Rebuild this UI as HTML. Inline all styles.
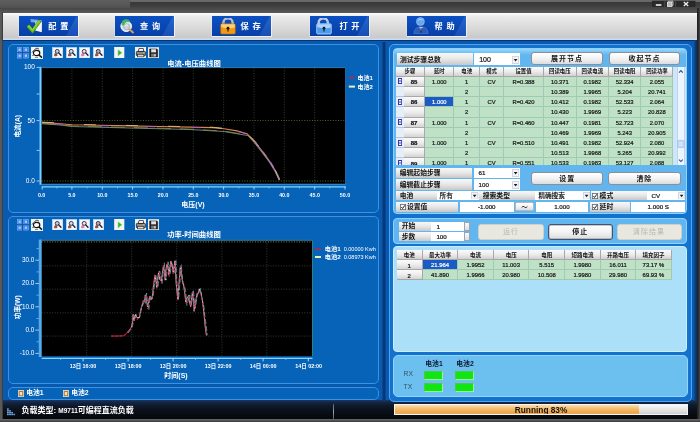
<!DOCTYPE html>
<html lang="zh"><head><meta charset="utf-8"><title>M9711</title>
<style>
*{box-sizing:border-box;margin:0;padding:0}
html,body{width:700px;height:422px;overflow:hidden;background:#4b4b4b}
#rb{left:697px;top:8px;width:3px;height:414px;background:linear-gradient(90deg,#1e1e1e,#2e2e2e 50%,#4a4a4a)}
#bb{left:0;top:418.6px;width:700px;height:3.4px;background:linear-gradient(#6a6a6a 0,#5a5a5a 35%,#3a3a3a 100%)}
#lb{left:0;top:12px;width:3px;height:407px;background:linear-gradient(90deg,#5c5c5c 0,#565656 55%,#2c3038 100%)}
body{position:relative;font-family:"Liberation Sans","Noto Sans CJK SC",sans-serif;font-size:8px;line-height:1;color:#1a1a1a;filter:blur(.4px)}
.a{position:absolute;white-space:nowrap;overflow:hidden}
.t{position:absolute;white-space:nowrap;line-height:1}
.c{text-align:center}
.w{color:#fff}
.b{font-weight:bold}
#title{left:0;top:0;width:700px;height:13px;background:linear-gradient(#6c6c6c 0,#666 1.5px,#3a3a3a 2.4px,#3c3c3c 5px,#484848 8.5px,#585858 12.6px)}
#tool{left:3px;top:12.6px;width:694px;height:27px;background:linear-gradient(#fdfdfd 0,#f6f6f6 1.4px,#ececec 3px,#e4e4e4 8px,#d6d6d6 17px,#c9c9c9 25.2px,#d4e2f6 26px,#c0d6f4 27px)}
.tb{position:absolute;top:15.9px;height:20.2px;width:58.9px;overflow:hidden;
 background:linear-gradient(#0b50c2 0,#0a49b6 45%,#083fa6 100%);box-shadow:.3px .5px 0 .6px rgba(255,255,255,.7)}
.tb:after{content:"";position:absolute;left:0;top:0;width:58.9px;height:20.2px;background:linear-gradient(#2766cc,#184fb6);clip-path:polygon(100% 0,100% 100%,80% 100%,98.5% 0)}
.tb .lbl{position:absolute;left:29.4px;top:6.9px;width:32px;font-size:8.2px;font-weight:bold;color:#fff;letter-spacing:3.8px;z-index:2;white-space:nowrap}
.tb svg{position:absolute;z-index:2}
#main{left:3px;top:39.6px;width:694px;height:361px;background:#075aae}
.pn{position:absolute;border:1.3px solid #3a92e4;border-radius:5px;background:#0763b8}
.ip{position:absolute;border:1px solid #8fd2ff;border-radius:4px}
.lb{position:absolute;background:linear-gradient(#f8f8f8 0,#e9e9e9 45%,#c8c8c8 100%);font-weight:bold;white-space:nowrap;overflow:hidden;color:#111}
.in{position:absolute;background:#fff;white-space:nowrap;overflow:hidden;color:#111}
.dd{position:absolute;width:7px;background:linear-gradient(#fff,#d8d8e0);border:.5px solid #7a8aa8}
.dd:after{content:"";position:absolute;left:1.5px;top:3.5px;border:2px solid transparent;border-top:2.5px solid #000}
.btn{position:absolute;border:1px solid #8a8f98;border-radius:3px;background:linear-gradient(#ffffff 0,#f3f3f3 50%,#dcdcdc 100%);text-align:center;font-weight:bold;font-size:7px;color:#111;letter-spacing:1px;white-space:nowrap;overflow:hidden}
.btn.dis{background:#e9e8e0;border-color:#d0d0c8;color:#b6b6ae;font-weight:normal}
.btn.def{border-color:#46526a;box-shadow:inset 0 0 0 .4px #8a96ac}
.hd{position:absolute;background:linear-gradient(#fbfbfb 0,#ececec 50%,#d0d0d0 100%);border-right:1px solid #a8a8a8;border-bottom:1px solid #a8a8a8;text-align:center;font-weight:bold;white-space:nowrap;overflow:hidden;color:#111}
.cl{position:absolute;background:#bfe2c6;border-right:1px solid #a2c8b6;border-bottom:1px solid #a2c8b6;text-align:center;white-space:nowrap;overflow:hidden;color:#151515}
.cl.sel{background:#1a5cc4;color:#fff;-webkit-text-stroke:.2px #fff}
.cl,.rh,.in{-webkit-text-stroke:.22px #1a1a1a}
.rh{position:absolute;background:linear-gradient(#fbfbfb 0,#ededed 50%,#d4d4d4 100%);border-right:1px solid #a8a8a8;border-bottom:1px solid #a8a8a8;text-align:center;white-space:nowrap;overflow:hidden;color:#111}
.ic{position:absolute;width:11.5px;height:11.5px;background:#f2f2f2;overflow:hidden}
</style></head>
<body>

<div id="title" class="a"><div class="a" style="left:0;top:0;width:130px;height:8.4px;background:linear-gradient(#5e5e5e,#585858 60%,#505050)"></div><svg class="a" style="left:651px;top:0" width="46" height="8" viewBox="0 0 46 8"><rect x="1" y=".8" width="43.4" height="6.2" fill="#292929"/><rect x="4.8" y="4.2" width="5.6" height="1.6" fill="#f0f0f0"/><path d="M13.8 .8V7M24.6 .8V7" stroke="#505050" stroke-width=".8"/><rect x="16.4" y="2.2" width="4.6" height="4.2" fill="#b8b8b8" stroke="#ececec" stroke-width=".8"/><path d="M17.6 2V1.2H22V5.4H21.2" fill="none" stroke="#dcdcdc" stroke-width=".8"/><path d="M32.8 2 L37.2 6 M37.2 2 L32.8 6" stroke="#f2f2f2" stroke-width="1.3"/></svg></div>
<div id="tool" class="a"></div><div id="rb" class="a"></div><div id="lb" class="a"></div><div id="bb" class="a"></div>
<div class="tb" style="left:18.9px"><svg style="left:7.6px;top:1.4px" width="18" height="18" viewBox="0 0 18 18"><path d="M4.4 2 L15.9 3.2 L15.7 5.8 L5 5.2Z" fill="#7fa6e4"/><path d="M9.4 4.6 L16 5.2 L15.8 15.2 L9.2 13.6Z" fill="#f3f5f9"/><path d="M9.4 4.6 L12.6 4.9 L12.4 9 L9.3 8.6Z" fill="#b8cdee"/><path d="M.8 9.7 L3.2 7.7 L6.4 11.7 L12.7 3 L15 4.8 L6.6 16.2Z" fill="#74c61c" stroke="#3f8c0c" stroke-width=".7"/><path d="M2 9.6 L3.2 8.6 L6.5 12.8 L12.8 4 L13.8 4.8" fill="none" stroke="#b4ec68" stroke-width=".6"/></svg><div class="lbl" style="left: 29.4px;">配置</div></div>
<div class="tb" style="left:115.1px"><svg style="left:5px;top:2.6px" width="16" height="16" viewBox="0 0 16 16"><circle cx="6.2" cy="8.2" r="5.3" fill="#dfe6ea" stroke="#f6f8fa" stroke-width="1"/><path d="M1.4 5.6 Q2.2 1.2 6 1.2 Q9.8 1.2 10 4.4 Q7.6 3 5.8 4.6 Q4.2 6 3.4 8 Q1.6 8 1.4 5.6Z" fill="#42b45e"/><circle cx="6.6" cy="8.8" r="3.1" fill="#c8d4dc" stroke="#98a8b4" stroke-width=".7"/><path d="M5 8.2 Q6.4 6 8.2 7.4" fill="none" stroke="#fff" stroke-width=".8"/><path d="M9.6 11.6 L13 14.4" stroke="#d8a050" stroke-width="2" stroke-linecap="round"/></svg><div class="lbl" style="left: 24.9px;">查询</div></div>
<div class="tb" style="left:212px"><svg style="left:8px;top:2.2px" width="17" height="17" viewBox="0 0 17 17"><path d="M3.4 7 V4.6 A4.6 4.2 0 0 1 12.6 4.6 V7" fill="none" stroke="#d4d6de" stroke-width="2.2"/><path d="M3.4 7 V4.6 A4.6 4.2 0 0 1 12.6 4.6" fill="none" stroke="#8a90a4" stroke-width=".6"/><rect x=".7" y="5.8" width="14.6" height="10.2" rx="1.2" fill="#f09a14" stroke="#b86c08" stroke-width=".6"/><path d="M1.2 6.3 H14.8 V9.4 Q8 11.4 1.2 9Z" fill="#ffd884" opacity=".85"/><circle cx="8" cy="10.2" r="1.4" fill="#241808"/><rect x="7.4" y="10.6" width="1.2" height="2.9" fill="#241808"/></svg><div class="lbl" style="left: 28.6px;">保存</div></div>
<div class="tb" style="left:309.7px"><svg style="left:6.4px;top:2.2px" width="17" height="17" viewBox="0 0 17 17"><path d="M2.6 7 V4.6 A4.6 4.2 0 0 1 11.8 4.6 V5.6" fill="none" stroke="#dfe6f0" stroke-width="2.2"/><path d="M2.6 7 V4.6 A4.6 4.2 0 0 1 11.8 4.6" fill="none" stroke="#8aa0c4" stroke-width=".6"/><rect x=".7" y="5.8" width="14.6" height="10.2" rx="1.2" fill="#4c9cec" stroke="#cfe6fc" stroke-width=".7"/><path d="M1.2 6.3 H14.8 V9.4 Q8 11.4 1.2 9Z" fill="#b4dcfc" opacity=".9"/><circle cx="8" cy="10.2" r="1.4" fill="#0c1c34"/><rect x="7.4" y="10.6" width="1.2" height="2.9" fill="#0c1c34"/></svg><div class="lbl" style="left: 29.7px;">打开</div></div>
<div class="tb" style="left:407.1px"><svg style="left:6px;top:1.6px" width="17" height="17" viewBox="0 0 17 17"><path d="M.9 16.6 Q1.2 9.8 8 9.8 Q14.8 9.8 15.1 16.6Z" fill="#2c5cb8" stroke="#5a8cdc" stroke-width=".5"/><circle cx="7.4" cy="4.6" r="4" fill="#6aa6ee" stroke="#9cc8f8" stroke-width=".6"/><path d="M5 3.4 Q7 1.4 9.4 3" fill="none" stroke="#cfe6ff" stroke-width=".7"/><path d="M6.4 9.9 L8 14.2 L9.6 9.9Z" fill="#f4f6fa"/><rect x="7.5" y="10.6" width="1.1" height="5.2" fill="#16243e"/></svg><div class="lbl" style="left: 27.5px;">帮助</div></div>
<div id="main" class="a"><div class="a" style="left:0;top:0;width:694px;height:1.8px;background:linear-gradient(#082862,#083c84)"></div><div class="a" style="left:378.9px;top:2px;width:4.2px;height:359px;background:linear-gradient(90deg,#08509e,#08387a 35%,#08347a 65%,#0850a0)"></div><div class="a" style="left:691px;top:0;width:3px;height:362px;background:linear-gradient(90deg,#08509e,#083878 60%,#062c68)"></div></div>
<div class="pn" style="left:7.8px;top:44px;width:371.4px;height:169.2px"></div>
<svg class="a" style="left:17px;top:46.7px" width="12" height="12" viewBox="0 0 12 12"><rect x="0.3" y="0.3" width="4.8" height="4.8" fill="#3a80e6" stroke="#78b4fc" stroke-width=".6"/><rect x="1.6" y="1.6" width="2.2" height="2.2" fill="#a8d0ff"/><rect x="0.3" y="6.3" width="4.8" height="4.8" fill="#3a80e6" stroke="#78b4fc" stroke-width=".6"/><rect x="1.6" y="7.6" width="2.2" height="2.2" fill="#a8d0ff"/><rect x="6.5" y="0.3" width="4.8" height="4.8" fill="#3a80e6" stroke="#78b4fc" stroke-width=".6"/><rect x="7.8" y="1.6" width="2.2" height="2.2" fill="#a8d0ff"/><rect x="6.5" y="6.3" width="4.8" height="4.8" fill="#3a80e6" stroke="#78b4fc" stroke-width=".6"/><rect x="7.8" y="7.6" width="2.2" height="2.2" fill="#a8d0ff"/><path d="M5.7 0V12M0 5.8H12" stroke="#0e479c" stroke-width=".9"/></svg><svg class="a" style="left:31px;top:46.7px" width="12" height="12" viewBox="0 0 12 12"><rect width="12" height="12" fill="#f4f4f4"/><path d="M1 5.5 L4 2.2 L6 1 L8 2.2" fill="none" stroke="#333" stroke-width=".9"/><ellipse cx="5.6" cy="6" rx="3.2" ry="2.7" fill="#fff" stroke="#111" stroke-width="1.2"/><path d="M8 8 L11 10.6" stroke="#111" stroke-width="1.6"/><path d="M1 8.5h2M4 10.5h3" stroke="#666" stroke-width=".7"/></svg><svg class="a" style="left:52px;top:46.7px" width="11.2" height="11.4" viewBox="0 0 12 12"><rect x=".3" y=".3" width="11.4" height="11.4" fill="#f3f6fc" stroke="#bcd4f4" stroke-width=".6"/><path d="M2.2 9.6 Q2 6.6 4.4 6.4 L6 8.4 Q5.6 10.4 2.2 9.6Z" fill="#8a4020" opacity=".9"/><circle cx="5.6" cy="4.6" r="2.1" fill="#c4ccdc" stroke="#2a2a38" stroke-width=".95"/><path d="M7.2 6.2 L9.6 8.8" stroke="#1c2040" stroke-width="1.5" stroke-linecap="round"/></svg><svg class="a" style="left:65.6px;top:46.7px" width="11.2" height="11.4" viewBox="0 0 12 12"><rect x=".3" y=".3" width="11.4" height="11.4" fill="#f3f6fc" stroke="#bcd4f4" stroke-width=".6"/><path d="M2.2 9.6 Q2 6.6 4.4 6.4 L6 8.4 Q5.6 10.4 2.2 9.6Z" fill="#8a4020" opacity=".9"/><circle cx="5.6" cy="4.6" r="2.1" fill="#d4dcec" stroke="#2a2a38" stroke-width=".95"/><path d="M7.2 6.2 L9.6 8.8" stroke="#1c2040" stroke-width="1.5" stroke-linecap="round"/></svg><svg class="a" style="left:79.3px;top:46.7px" width="11.2" height="11.4" viewBox="0 0 12 12"><rect x=".3" y=".3" width="11.4" height="11.4" fill="#f3f6fc" stroke="#bcd4f4" stroke-width=".6"/><path d="M2.2 9.6 Q2 6.6 4.4 6.4 L6 8.4 Q5.6 10.4 2.2 9.6Z" fill="#e07098" opacity=".9"/><circle cx="5.6" cy="4.6" r="2.1" fill="#f4dce8" stroke="#2a2a38" stroke-width=".95"/><path d="M7.2 6.2 L9.6 8.8" stroke="#1c2040" stroke-width="1.5" stroke-linecap="round"/></svg><svg class="a" style="left:93px;top:46.7px" width="11.2" height="11.4" viewBox="0 0 12 12"><rect x=".3" y=".3" width="11.4" height="11.4" fill="#f3f6fc" stroke="#bcd4f4" stroke-width=".6"/><path d="M2.2 9.6 Q2 6.6 4.4 6.4 L6 8.4 Q5.6 10.4 2.2 9.6Z" fill="#9a3c1c" opacity=".9"/><circle cx="5.6" cy="4.6" r="2.1" fill="#b8a8a8" stroke="#2a2a38" stroke-width=".95"/><path d="M7.2 6.2 L9.6 8.8" stroke="#1c2040" stroke-width="1.5" stroke-linecap="round"/></svg><svg class="a" style="left:114px;top:46.7px" width="10.5" height="11.6" viewBox="0 0 10.5 12"><rect width="10.5" height="12" fill="#f4f4f0"/><path d="M4 2.8 L8 6 L4 9.2Z" fill="#2cb42c" stroke="#7fdc7f" stroke-width=".5"/></svg><svg class="a" style="left:134.6px;top:46.7px" width="11.6" height="11.6" viewBox="0 0 12 12"><rect width="12" height="12" fill="#efefef"/><path d="M3.3 4.6 L4.2 1.6 H8.6 L8.9 4.6Z" fill="#fff" stroke="#222" stroke-width=".8"/><rect x="1.4" y="4.6" width="9.4" height="4.4" rx=".8" fill="#8a8a8a" stroke="#1a1a1a" stroke-width=".8"/><rect x="2.8" y="7.6" width="6.4" height="2.6" fill="#d8d8d8" stroke="#222" stroke-width=".6"/><rect x="8.4" y="5.6" width="1.4" height=".9" fill="#d8e060"/></svg><svg class="a" style="left:148.3px;top:46.7px" width="11.2" height="11.6" viewBox="0 0 12 12"><rect width="12" height="12" fill="#ededed"/><path d="M1.8 1.8 H9.4 L10.4 2.8 V10.4 H1.8Z" fill="#262626" stroke="#000" stroke-width=".5"/><rect x="3.4" y="2.2" width="5.2" height="3.3" fill="#e4e4e4"/><rect x="3.4" y="7" width="5.4" height="3.2" fill="#7a7a7a"/><rect x="6.8" y="7.5" width="1.3" height="2.2" fill="#e8e8e8"/></svg><div class="t w b c" style="left: 154px; top: 59.8px; width: 80px; font-size: 7.3px;">电流-电压曲线图</div>
<svg class="a" style="left:0;top:60px" width="380" height="150" viewBox="0 60 380 150"><rect x="41.6" y="67.8" width="303.79999999999995" height="116.10000000000001" fill="#000"/><path d="M71.9 67.8V183.9" stroke="#567458" stroke-width=".8" stroke-dasharray="1 1.6" opacity=".68"/><path d="M102.3 67.8V183.9" stroke="#567458" stroke-width=".8" stroke-dasharray="1 1.6" opacity=".68"/><path d="M132.6 67.8V183.9" stroke="#567458" stroke-width=".8" stroke-dasharray="1 1.6" opacity=".68"/><path d="M163.0 67.8V183.9" stroke="#567458" stroke-width=".8" stroke-dasharray="1 1.6" opacity=".68"/><path d="M193.3 67.8V183.9" stroke="#567458" stroke-width=".8" stroke-dasharray="1 1.6" opacity=".68"/><path d="M223.6 67.8V183.9" stroke="#567458" stroke-width=".8" stroke-dasharray="1 1.6" opacity=".68"/><path d="M254.0 67.8V183.9" stroke="#567458" stroke-width=".8" stroke-dasharray="1 1.6" opacity=".68"/><path d="M284.3 67.8V183.9" stroke="#567458" stroke-width=".8" stroke-dasharray="1 1.6" opacity=".68"/><path d="M314.7 67.8V183.9" stroke="#567458" stroke-width=".8" stroke-dasharray="1 1.6" opacity=".68"/><path d="M41.6 120.6H345.4" stroke="#8a9448" stroke-width=".8" stroke-dasharray="1 1.6" opacity=".88"/><path d="M41.6 181H345.4" stroke="#8aa044" stroke-width=".8" stroke-dasharray="1 1.6" opacity=".88"/><path d="M40.45 66.8V184.7" stroke="#7ccef8" stroke-width="1.9"/><path d="M41.6 184.25H345.7" stroke="#4fa6e4" stroke-width=".7"/><path d="M41.8 186.8H346.0" stroke="#86d2fa" stroke-width="1.3"/><path d="M345.59999999999997 67.8V183.9" stroke="#3a78b8" stroke-width=".7"/><path d="M41.6 67.6H345.4" stroke="#4a86b0" stroke-width=".7"/><path d="M42.2 186.8v2.8" stroke="#a8dcfc" stroke-width=".9"/><path d="M56.8 186.8v1.7" stroke="#8cc8f4" stroke-width=".7"/><path d="M71.9 186.8v2.8" stroke="#a8dcfc" stroke-width=".9"/><path d="M87.1 186.8v1.7" stroke="#8cc8f4" stroke-width=".7"/><path d="M102.3 186.8v2.8" stroke="#a8dcfc" stroke-width=".9"/><path d="M117.5 186.8v1.7" stroke="#8cc8f4" stroke-width=".7"/><path d="M132.6 186.8v2.8" stroke="#a8dcfc" stroke-width=".9"/><path d="M147.8 186.8v1.7" stroke="#8cc8f4" stroke-width=".7"/><path d="M163.0 186.8v2.8" stroke="#a8dcfc" stroke-width=".9"/><path d="M178.1 186.8v1.7" stroke="#8cc8f4" stroke-width=".7"/><path d="M193.3 186.8v2.8" stroke="#a8dcfc" stroke-width=".9"/><path d="M208.5 186.8v1.7" stroke="#8cc8f4" stroke-width=".7"/><path d="M223.6 186.8v2.8" stroke="#a8dcfc" stroke-width=".9"/><path d="M238.8 186.8v1.7" stroke="#8cc8f4" stroke-width=".7"/><path d="M254.0 186.8v2.8" stroke="#a8dcfc" stroke-width=".9"/><path d="M269.1 186.8v1.7" stroke="#8cc8f4" stroke-width=".7"/><path d="M284.3 186.8v2.8" stroke="#a8dcfc" stroke-width=".9"/><path d="M299.5 186.8v1.7" stroke="#8cc8f4" stroke-width=".7"/><path d="M314.7 186.8v2.8" stroke="#a8dcfc" stroke-width=".9"/><path d="M329.8 186.8v1.7" stroke="#8cc8f4" stroke-width=".7"/><path d="M345.0 186.8v2.8" stroke="#a8dcfc" stroke-width=".9"/><path d="M36.6 67.4h3" stroke="#bfe4ff" stroke-width=".8"/><path d="M36.6 94h3" stroke="#bfe4ff" stroke-width=".8"/><path d="M36.6 120.6h3" stroke="#bfe4ff" stroke-width=".8"/><path d="M36.6 150.4h3" stroke="#bfe4ff" stroke-width=".8"/><path d="M36.6 181h3" stroke="#bfe4ff" stroke-width=".8"/><polyline points="42.0,123.7 60.0,125.1 72.0,126.5 100.0,127.2 130.0,127.9 160.0,128.7 190.0,129.6 224.0,131.6 243.0,134.7 248.0,135.5 254.5,142.6 262.0,152.1 269.7,162.5 275.4,172.0 279.4,180.3" fill="none" stroke="#6a8474" stroke-width="1.05"/><polyline points="42.0,123.2 60.0,124.6 72.0,126.0 100.0,126.7 130.0,127.4 160.0,128.2 190.0,129.1 224.0,131.1 243.0,134.2 248.0,135.0 254.5,142.1 262.0,151.6 269.7,162.0 275.4,171.5 279.4,179.8" fill="none" stroke="#8a8c4c" stroke-width=".8" stroke-dasharray="14 9"/><polyline points="42.0,122.5 50.0,122.9 60.0,123.7 72.0,124.7 100.0,125.3 130.0,125.9 160.0,126.5 190.0,127.1 212.0,127.6 224.0,128.7 237.0,130.9 247.0,133.7 254.5,141.4" fill="none" stroke="#d48658" stroke-width="1.15"/><polyline points="254.5,141.4 262.0,150.9 269.7,161.3 275.4,170.8 279.4,179.7" fill="none" stroke="#c4788c" stroke-width="1.05"/><polyline points="42.0,122.9 50.0,123.3 60.0,124.1 72.0,125.1 100.0,125.7 130.0,126.3 160.0,126.9 190.0,127.5 212.0,128.0 224.0,129.1 237.0,131.3 247.0,134.1 254.5,141.8 262.0,151.3 269.7,161.7 275.4,171.2 279.4,180.1" fill="none" stroke="#a85cc0" stroke-width=".9" stroke-dasharray="9 37" stroke-dashoffset="-58"/><polyline points="42.0,122.1 50.0,122.5 60.0,123.3 72.0,124.3 100.0,124.9 130.0,125.5 160.0,126.1 190.0,126.7 212.0,127.2 224.0,128.3 237.0,130.5 247.0,133.3 254.5,141.0 262.0,150.5 269.7,160.9 275.4,170.4 279.4,179.3" fill="none" stroke="#ecc878" stroke-width=".8" stroke-dasharray="12 30"/><polyline points="255.0,141.3 262.5,150.8 270.2,161.2 275.9,170.7 279.9,179.6" fill="none" stroke="#7686d8" stroke-width=".9" stroke-dasharray="6 7"/><polyline points="254.2,141.3 261.7,150.8 269.4,161.2 275.1,170.7 279.1,179.6" fill="none" stroke="#e070a0" stroke-width=".8" stroke-dasharray="5 9"/><path d="M349 77.6h5.8" stroke="#b4284c" stroke-width="1.7"/><path d="M348.8 86.6h6.2" stroke="#e4f2b4" stroke-width="2"/></svg>
<div class="t w" style="left:11.8px;top:64.2px;width:23px;text-align:right;font-size:6.5px">100</div><div class="t w" style="left:11.8px;top:117.6px;width:23px;text-align:right;font-size:6.5px">50</div><div class="t w" style="left:11.8px;top:177.8px;width:23px;text-align:right;font-size:6.5px">0.0</div><div class="t w c" style="left:29.6px;top:192.6px;width:24px;font-size:5.3px;font-weight:bold">0.0</div><div class="t w c" style="left:59.9px;top:192.6px;width:24px;font-size:5.3px;font-weight:bold">5.0</div><div class="t w c" style="left:90.3px;top:192.6px;width:24px;font-size:5.3px;font-weight:bold">10.0</div><div class="t w c" style="left:120.6px;top:192.6px;width:24px;font-size:5.3px;font-weight:bold">15.0</div><div class="t w c" style="left:151.0px;top:192.6px;width:24px;font-size:5.3px;font-weight:bold">20.0</div><div class="t w c" style="left:181.3px;top:192.6px;width:24px;font-size:5.3px;font-weight:bold">25.0</div><div class="t w c" style="left:211.6px;top:192.6px;width:24px;font-size:5.3px;font-weight:bold">30.0</div><div class="t w c" style="left:242.0px;top:192.6px;width:24px;font-size:5.3px;font-weight:bold">35.0</div><div class="t w c" style="left:272.3px;top:192.6px;width:24px;font-size:5.3px;font-weight:bold">40.0</div><div class="t w c" style="left:302.7px;top:192.6px;width:24px;font-size:5.3px;font-weight:bold">45.0</div><div class="t w c" style="left:333.0px;top:192.6px;width:24px;font-size:5.3px;font-weight:bold">50.0</div><div class="t w b c" style="left: 168px; top: 201.2px; width: 50px; font-size: 7px;">电压(V)</div><div class="t w b c" style="left: -7px; top: 122.5px; width: 50px; font-size: 6.6px; transform: rotate(-90deg);">电流(A)</div><div class="t w" style="left: 357.6px; top: 74.6px; font-size: 6px; font-weight: bold;">电池1</div><div class="t w" style="left: 357.6px; top: 83.6px; font-size: 6px; font-weight: bold;">电池2</div>
<div class="pn" style="left:7.8px;top:216.4px;width:371.6px;height:167.4px"></div>
<svg class="a" style="left:17px;top:218.6px" width="12" height="12" viewBox="0 0 12 12"><rect x="0.3" y="0.3" width="4.8" height="4.8" fill="#3a80e6" stroke="#78b4fc" stroke-width=".6"/><rect x="1.6" y="1.6" width="2.2" height="2.2" fill="#a8d0ff"/><rect x="0.3" y="6.3" width="4.8" height="4.8" fill="#3a80e6" stroke="#78b4fc" stroke-width=".6"/><rect x="1.6" y="7.6" width="2.2" height="2.2" fill="#a8d0ff"/><rect x="6.5" y="0.3" width="4.8" height="4.8" fill="#3a80e6" stroke="#78b4fc" stroke-width=".6"/><rect x="7.8" y="1.6" width="2.2" height="2.2" fill="#a8d0ff"/><rect x="6.5" y="6.3" width="4.8" height="4.8" fill="#3a80e6" stroke="#78b4fc" stroke-width=".6"/><rect x="7.8" y="7.6" width="2.2" height="2.2" fill="#a8d0ff"/><path d="M5.7 0V12M0 5.8H12" stroke="#0e479c" stroke-width=".9"/></svg><svg class="a" style="left:31px;top:218.6px" width="12" height="12" viewBox="0 0 12 12"><rect width="12" height="12" fill="#f4f4f4"/><path d="M1 5.5 L4 2.2 L6 1 L8 2.2" fill="none" stroke="#333" stroke-width=".9"/><ellipse cx="5.6" cy="6" rx="3.2" ry="2.7" fill="#fff" stroke="#111" stroke-width="1.2"/><path d="M8 8 L11 10.6" stroke="#111" stroke-width="1.6"/><path d="M1 8.5h2M4 10.5h3" stroke="#666" stroke-width=".7"/></svg><svg class="a" style="left:52px;top:218.6px" width="11.2" height="11.4" viewBox="0 0 12 12"><rect x=".3" y=".3" width="11.4" height="11.4" fill="#f3f6fc" stroke="#bcd4f4" stroke-width=".6"/><path d="M2.2 9.6 Q2 6.6 4.4 6.4 L6 8.4 Q5.6 10.4 2.2 9.6Z" fill="#8a4020" opacity=".9"/><circle cx="5.6" cy="4.6" r="2.1" fill="#c4ccdc" stroke="#2a2a38" stroke-width=".95"/><path d="M7.2 6.2 L9.6 8.8" stroke="#1c2040" stroke-width="1.5" stroke-linecap="round"/></svg><svg class="a" style="left:65.6px;top:218.6px" width="11.2" height="11.4" viewBox="0 0 12 12"><rect x=".3" y=".3" width="11.4" height="11.4" fill="#f3f6fc" stroke="#bcd4f4" stroke-width=".6"/><path d="M2.2 9.6 Q2 6.6 4.4 6.4 L6 8.4 Q5.6 10.4 2.2 9.6Z" fill="#8a4020" opacity=".9"/><circle cx="5.6" cy="4.6" r="2.1" fill="#d4dcec" stroke="#2a2a38" stroke-width=".95"/><path d="M7.2 6.2 L9.6 8.8" stroke="#1c2040" stroke-width="1.5" stroke-linecap="round"/></svg><svg class="a" style="left:79.3px;top:218.6px" width="11.2" height="11.4" viewBox="0 0 12 12"><rect x=".3" y=".3" width="11.4" height="11.4" fill="#f3f6fc" stroke="#bcd4f4" stroke-width=".6"/><path d="M2.2 9.6 Q2 6.6 4.4 6.4 L6 8.4 Q5.6 10.4 2.2 9.6Z" fill="#e07098" opacity=".9"/><circle cx="5.6" cy="4.6" r="2.1" fill="#f4dce8" stroke="#2a2a38" stroke-width=".95"/><path d="M7.2 6.2 L9.6 8.8" stroke="#1c2040" stroke-width="1.5" stroke-linecap="round"/></svg><svg class="a" style="left:93px;top:218.6px" width="11.2" height="11.4" viewBox="0 0 12 12"><rect x=".3" y=".3" width="11.4" height="11.4" fill="#f3f6fc" stroke="#bcd4f4" stroke-width=".6"/><path d="M2.2 9.6 Q2 6.6 4.4 6.4 L6 8.4 Q5.6 10.4 2.2 9.6Z" fill="#9a3c1c" opacity=".9"/><circle cx="5.6" cy="4.6" r="2.1" fill="#b8a8a8" stroke="#2a2a38" stroke-width=".95"/><path d="M7.2 6.2 L9.6 8.8" stroke="#1c2040" stroke-width="1.5" stroke-linecap="round"/></svg><svg class="a" style="left:114px;top:218.6px" width="10.5" height="11.6" viewBox="0 0 10.5 12"><rect width="10.5" height="12" fill="#f4f4f0"/><path d="M4 2.8 L8 6 L4 9.2Z" fill="#2cb42c" stroke="#7fdc7f" stroke-width=".5"/></svg><svg class="a" style="left:134.6px;top:218.6px" width="11.6" height="11.6" viewBox="0 0 12 12"><rect width="12" height="12" fill="#efefef"/><path d="M3.3 4.6 L4.2 1.6 H8.6 L8.9 4.6Z" fill="#fff" stroke="#222" stroke-width=".8"/><rect x="1.4" y="4.6" width="9.4" height="4.4" rx=".8" fill="#8a8a8a" stroke="#1a1a1a" stroke-width=".8"/><rect x="2.8" y="7.6" width="6.4" height="2.6" fill="#d8d8d8" stroke="#222" stroke-width=".6"/><rect x="8.4" y="5.6" width="1.4" height=".9" fill="#d8e060"/></svg><svg class="a" style="left:148.3px;top:218.6px" width="11.2" height="11.6" viewBox="0 0 12 12"><rect width="12" height="12" fill="#ededed"/><path d="M1.8 1.8 H9.4 L10.4 2.8 V10.4 H1.8Z" fill="#262626" stroke="#000" stroke-width=".5"/><rect x="3.4" y="2.2" width="5.2" height="3.3" fill="#e4e4e4"/><rect x="3.4" y="7" width="5.4" height="3.2" fill="#7a7a7a"/><rect x="6.8" y="7.5" width="1.3" height="2.2" fill="#e8e8e8"/></svg><div class="t w b c" style="left: 154px; top: 231.2px; width: 80px; font-size: 7.3px;">功率-时间曲线图</div>
<svg class="a" style="left:0;top:232px" width="380" height="135" viewBox="0 232 380 135"><rect x="41.7" y="240.5" width="270.5" height="115.69999999999999" fill="#000"/><path d="M86.7 240.5V356.2" stroke="#567458" stroke-width=".8" stroke-dasharray="1 1.6" opacity=".68"/><path d="M131.7 240.5V356.2" stroke="#567458" stroke-width=".8" stroke-dasharray="1 1.6" opacity=".68"/><path d="M176.7 240.5V356.2" stroke="#567458" stroke-width=".8" stroke-dasharray="1 1.6" opacity=".68"/><path d="M221.9 240.5V356.2" stroke="#567458" stroke-width=".8" stroke-dasharray="1 1.6" opacity=".68"/><path d="M266.8 240.5V356.2" stroke="#567458" stroke-width=".8" stroke-dasharray="1 1.6" opacity=".68"/><path d="M41.7 265.9H312.2" stroke="#5c7458" stroke-width=".8" stroke-dasharray="1 1.6" opacity=".68"/><path d="M41.7 289.2H312.2" stroke="#5c7458" stroke-width=".8" stroke-dasharray="1 1.6" opacity=".68"/><path d="M41.7 312.8H312.2" stroke="#5c7458" stroke-width=".8" stroke-dasharray="1 1.6" opacity=".68"/><path d="M41.7 336.1H312.2" stroke="#5c7458" stroke-width=".8" stroke-dasharray="1 1.6" opacity=".68"/><path d="M39.3 239.6V357" stroke="#8ad2fa" stroke-width=".8"/><path d="M40.85 239.6V357" stroke="#7ccef8" stroke-width="1.1"/><path d="M41.7 358.4H312.5" stroke="#86d2fa" stroke-width="1.4"/><path d="M312.5 240.5V356.2" stroke="#2f8a7a" stroke-width=".9"/><path d="M41.7 240.3H312.2" stroke="#4a8a88" stroke-width=".7"/><path d="M41.7 241.9H312.2" stroke="#a8c4ac" stroke-width=".8" stroke-dasharray="1 1.6" opacity=".85"/><path d="M83.1 358.4v3" stroke="#bfe4ff" stroke-width=".9"/><path d="M60.599999999999994 358.4v1.7" stroke="#8cc8f4" stroke-width=".7"/><path d="M128.1 358.4v3" stroke="#bfe4ff" stroke-width=".9"/><path d="M105.6 358.4v1.7" stroke="#8cc8f4" stroke-width=".7"/><path d="M173.1 358.4v3" stroke="#bfe4ff" stroke-width=".9"/><path d="M150.6 358.4v1.7" stroke="#8cc8f4" stroke-width=".7"/><path d="M218.1 358.4v3" stroke="#bfe4ff" stroke-width=".9"/><path d="M195.6 358.4v1.7" stroke="#8cc8f4" stroke-width=".7"/><path d="M263.1 358.4v3" stroke="#bfe4ff" stroke-width=".9"/><path d="M240.60000000000002 358.4v1.7" stroke="#8cc8f4" stroke-width=".7"/><path d="M308.3 358.4v3" stroke="#bfe4ff" stroke-width=".9"/><path d="M285.8 358.4v1.7" stroke="#8cc8f4" stroke-width=".7"/><path d="M35.4 260.2h3.5" stroke="#bfe4ff" stroke-width=".8"/><path d="M36.4 248.6h2.5" stroke="#9fd0ff" stroke-width=".6"/><path d="M35.4 283.5h3.5" stroke="#bfe4ff" stroke-width=".8"/><path d="M36.4 271.9h2.5" stroke="#9fd0ff" stroke-width=".6"/><path d="M35.4 306.8h3.5" stroke="#bfe4ff" stroke-width=".8"/><path d="M36.4 295.2h2.5" stroke="#9fd0ff" stroke-width=".6"/><path d="M35.4 330.1h3.5" stroke="#bfe4ff" stroke-width=".8"/><path d="M36.4 318.5h2.5" stroke="#9fd0ff" stroke-width=".6"/><path d="M35.4 353.4h3.5" stroke="#bfe4ff" stroke-width=".8"/><path d="M36.4 341.79999999999995h2.5" stroke="#9fd0ff" stroke-width=".6"/><polyline points="128.1,333.0 132.3,327.3 133.4,321.0 134.5,314.3 134.9,317.7 136.4,315.7 137.6,317.9 139.8,317.2 141.7,307.3 144.1,302.3 145.4,303.9 146.6,293.0 147.2,298.7 148.8,310.0 149.8,299.7 150.5,295.9 151.8,299.1 153.2,296.6 154.3,286.1 155.8,275.0 156.8,282.4 157.9,287.5 158.7,280.9 159.7,270.9 161.1,279.7 162.1,283.6 163.1,273.4 164.3,262.8 165.2,274.4 166.2,280.1 167.0,271.1 168.1,261.8 169.2,267.0 170.1,274.2 171.0,267.9 171.8,261.8 172.9,267.5 174.2,272.7 174.6,267.0 176.0,260.7 176.9,282.9 178.6,299.7 180.0,282.2 181.3,264.6 182.1,275.5 183.1,283.5 184.7,286.0 185.8,293.3 186.9,305.4 188.4,300.0 189.8,294.9 190.4,300.8 191.5,305.0 192.4,298.6 193.4,289.9 194.5,303.3 195.2,308.3 196.2,302.8 197.5,293.1 199.1,293.1 200.6,288.5 201.5,294.8 202.7,301.6 203.9,306.3 204.8,315.6 206.3,326.0 207.2,335.4" fill="none" stroke="#5fc2d4" stroke-width=".7" stroke-linejoin="round" stroke-dasharray="5 2"/><polyline points="127.0,333.0 131.3,327.3 132.7,321.0 133.1,314.3 134.2,320.6 135.8,314.2 136.9,317.7 139.2,317.8 140.7,310.1 143.3,300.7 144.5,301.5 145.3,294.8 146.3,299.6 147.5,306.9 148.6,301.7 149.7,296.1 150.9,300.0 152.1,298.4 153.3,287.2 155.0,275.4 155.9,280.2 156.6,287.3 157.4,280.2 158.5,272.8 159.9,280.0 161.4,280.8 162.1,274.8 163.3,266.9 164.1,270.1 165.2,280.2 166.1,268.2 167.1,264.1 168.3,267.3 168.8,274.7 169.7,269.3 170.9,261.1 172.0,265.6 173.1,272.3 174.1,266.3 175.0,260.8 176.1,283.1 177.8,299.1 179.1,281.7 180.2,267.6 181.3,272.2 182.3,280.4 183.8,286.8 184.9,294.1 185.7,302.0 187.3,297.9 188.7,295.4 189.7,303.0 190.7,306.7 191.8,296.6 192.3,292.6 193.6,299.9 194.1,311.4 195.9,299.7 197.2,293.8 198.3,293.7 199.3,288.8 201.1,293.8 202.2,298.9 203.4,308.4 204.1,315.6 205.1,326.0 206.4,335.4" fill="none" stroke="#f2eee8" stroke-width=".7" stroke-linejoin="round"/><polyline points="111.0,336.0 117.0,336.0 123.4,335.8 127.0,333.0 131.3,327.3" fill="none" stroke="#c42444" stroke-width=".9"/><polyline points="111.2,336.1 117.2,336.1 123.6,335.9 127.2,333.1 131.5,327.4 132.8,321.1 133.5,314.4 134.4,320.1 135.8,316.1 137.2,319.6 139.2,317.0 141.2,308.1 143.2,300.1 144.6,303.1 145.8,294.8 146.8,301.1 147.9,309.1 148.8,302.1 149.7,296.1 151.0,300.1 152.2,298.7 153.6,285.1 154.9,274.0 156.0,281.1 157.0,288.3 157.9,279.1 158.8,271.4 160.2,278.1 161.4,283.1 162.5,273.1 163.5,264.9 164.4,272.1 165.3,279.1 166.4,270.1 167.4,262.2 168.3,269.1 169.2,276.6 170.2,268.1 171.3,260.9 172.2,267.1 173.2,274.0 174.2,268.1 175.2,262.2 176.4,281.1 177.8,300.1 179.1,283.1 180.5,266.1 181.4,274.1 182.2,281.8 184.1,285.7 185.2,295.1 186.2,303.9 187.5,299.1 188.8,296.1 189.9,301.1 190.9,306.5 191.8,298.1 192.7,290.9 193.6,301.1 194.5,310.4 195.8,301.1 197.1,292.2 198.4,294.1 199.7,290.9 201.0,295.1 202.3,300.1 203.4,308.1 204.4,315.7 205.5,326.1 206.5,335.5" fill="none" stroke="#dc2850" stroke-width=".85" stroke-dasharray="2.6 1.6" stroke-linejoin="round"/><path d="M315.2 249h5.6" stroke="#b4284c" stroke-width="1.7"/><path d="M315 257h6" stroke="#e4f2b4" stroke-width="2"/></svg>
<div class="t w" style="left:10.8px;top:257.0px;width:23.6px;text-align:right;font-size:6.4px">30.0</div><div class="t w" style="left:10.8px;top:280.3px;width:23.6px;text-align:right;font-size:6.4px">20.0</div><div class="t w" style="left:10.8px;top:303.6px;width:23.6px;text-align:right;font-size:6.4px">10.0</div><div class="t w" style="left:10.8px;top:326.9px;width:23.6px;text-align:right;font-size:6.4px">0.0</div><div class="t w" style="left:10.8px;top:350.2px;width:23.6px;text-align:right;font-size:6.4px">-10.0</div><div class="t w c" style="left: 63px; top: 363.7px; width: 40px; font-size: 5.4px; font-weight: bold;">13日 16:00</div><div class="t w c" style="left: 108.1px; top: 363.7px; width: 40px; font-size: 5.4px; font-weight: bold;">13日 18:00</div><div class="t w c" style="left: 153.1px; top: 363.7px; width: 40px; font-size: 5.4px; font-weight: bold;">13日 20:00</div><div class="t w c" style="left: 198.2px; top: 363.7px; width: 40px; font-size: 5.4px; font-weight: bold;">13日 22:00</div><div class="t w c" style="left: 243.1px; top: 363.7px; width: 40px; font-size: 5.4px; font-weight: bold;">14日 00:00</div><div class="t w c" style="left: 288.6px; top: 363.7px; width: 40px; font-size: 5.4px; font-weight: bold;">14日 02:00</div><div class="t w b c" style="left: 151px; top: 371.6px; width: 50px; font-size: 7px;">时间(S)</div><div class="t w b c" style="left: -7px; top: 304.2px; width: 50px; font-size: 6.6px; transform: rotate(-90deg);">功率(W)</div><div class="t w" style="left: 324.8px; top: 246px; font-size: 5.5px;"><b style="font-size:6.2px">电池1</b>&nbsp; 0.00000 Kwh</div><div class="t w" style="left: 324.8px; top: 254px; font-size: 5.5px;"><b style="font-size:6.2px">电池2</b>&nbsp; 0.08973 Kwh</div>
<div class="pn" style="left:7.8px;top:386.8px;width:371.6px;height:12.8px;border-radius:5px"></div>
<svg class="a" style="left:17.6px;top:389.8px" width="6" height="7.2" viewBox="0 0 6 7.2"><rect x=".3" y=".3" width="5.4" height="6.6" fill="#eed8a8" stroke="#f8ecd0" stroke-width=".6"/><rect x="1.3" y="1.5" width="3.4" height="4.2" fill="#f4e2b8" stroke="#b87a38" stroke-width="1"/></svg><div class="t w b" style="left: 26.2px; top: 390.2px; font-size: 6.8px;">电池1</div><svg class="a" style="left:62.6px;top:389.8px" width="6" height="7.2" viewBox="0 0 6 7.2"><rect x=".3" y=".3" width="5.4" height="6.6" fill="#eed8a8" stroke="#f8ecd0" stroke-width=".6"/><rect x="1.3" y="1.5" width="3.4" height="4.2" fill="#f4e2b8" stroke="#b87a38" stroke-width="1"/></svg><div class="t w b" style="left: 71.2px; top: 390.2px; font-size: 6.8px;">电池2</div><div class="a" style="left:3px;top:400px;width:694px;height:19px;background:linear-gradient(#1a3a66 0,#14284a 10%,#0f1a2c 28%,#0a1018 58%,#05070b 100%)"></div>
<svg class="a" style="left:6.8px;top:407.6px" width="9" height="8" viewBox="0 0 9 8"><rect x="0.0" y="5.7" width="1.8" height="1.5" fill="#6f9edc"/><rect x="0.0" y="3.9" width="1.8" height="1.5" fill="#6f9edc"/><rect x="0.0" y="2.1" width="1.8" height="1.5" fill="#6f9edc"/><rect x="0.0" y="0.3" width="1.8" height="1.5" fill="#6f9edc"/><rect x="2.1" y="5.7" width="1.8" height="1.5" fill="#6f9edc"/><rect x="2.1" y="3.9" width="1.8" height="1.5" fill="#6f9edc"/><rect x="2.1" y="2.1" width="1.8" height="1.5" fill="#6f9edc"/><rect x="4.2" y="5.7" width="1.8" height="1.5" fill="#6f9edc"/><rect x="4.2" y="3.9" width="1.8" height="1.5" fill="#6f9edc"/><rect x="6.3" y="5.7" width="1.8" height="1.5" fill="#6f9edc"/></svg><div class="t w b" style="left: 21.4px; top: 406.6px; font-size: 8px;">负载类型: <span style="font-size:6.5px">M9711</span>可编程直流负载</div>
<div class="a" style="left:332.6px;top:403.5px;width:1.2px;height:15px;background:linear-gradient(#5a6068,#9aa0a8 50%,#5a6068)"></div>
<div class="pn" style="left:389px;top:44px;width:303.2px;height:358px;background:#1472cc;border-color:#4ea4ee"></div>
<div class="ip" style="left:393.2px;top:48.2px;width:294px;height:166px;background:linear-gradient(#9ad6fb 0,#78c4f6 3px,#62b6f0 6px)"></div>
<div class="lb" style="left: 396.6px; top: 53.4px; width: 76px; height: 12px; padding: 3.3px 0px 0px 3.4px; font-size: 6.8px;">测试步骤总数</div><div class="in" style="left:473.8px;top:53.4px;width:46px;height:12px;padding:3.0px 5.4px 0 5.4px;font-size:7px;text-align:left">100</div><svg class="a" style="left:512.2px;top:55.6px" width="7.2" height="8" viewBox="0 0 7.2 8"><rect x=".3" y=".3" width="6.6" height="7.4" rx=".8" fill="#f2f4f8" stroke="#aab4c6" stroke-width=".6"/><path d="M1.8 2.9 H5.4 L3.6 5.5Z" fill="#16181c"/></svg><div class="btn " style="left: 531.4px; top: 52.4px; width: 71.4px; height: 12.6px; padding-top: 1.8px;">展开节点</div><div class="btn " style="left: 608.6px; top: 52.4px; width: 71.6px; height: 12.6px; padding-top: 1.8px;">收起节点</div><div class="a" style="left:395.6px;top:66.8px;width:290px;height:98.2px;background:#bfe2c6"><div class="hd" style="left: 0px; top: 0px; width: 29.6px; height: 10px; padding-top: 2.4px; font-size: 5.4px;">步骤</div><div class="hd" style="left: 29.6px; top: 0px; width: 29.3px; height: 10px; padding-top: 2.4px; font-size: 5.4px;">延时</div><div class="hd" style="left: 58.9px; top: 0px; width: 25.3px; height: 10px; padding-top: 2.4px; font-size: 5.4px;">电池</div><div class="hd" style="left: 84.2px; top: 0px; width: 24.5px; height: 10px; padding-top: 2.4px; font-size: 5.4px;">模式</div><div class="hd" style="left: 108.7px; top: 0px; width: 39.5px; height: 10px; padding-top: 2.4px; font-size: 5.4px;">设置值</div><div class="hd" style="left: 148.2px; top: 0px; width: 33px; height: 10px; padding-top: 2.4px; font-size: 5.4px;">回读电压</div><div class="hd" style="left: 181.2px; top: 0px; width: 32.1px; height: 10px; padding-top: 2.4px; font-size: 5.4px;">回读电流</div><div class="hd" style="left: 213.3px; top: 0px; width: 32.5px; height: 10px; padding-top: 2.4px; font-size: 5.4px;">回读电阻</div><div class="hd" style="left: 245.8px; top: 0px; width: 32.1px; height: 10px; padding-top: 2.4px; font-size: 5.4px;">回读功率</div><div class="a" style="left:0;top:10.0px;width:8.2px;height:10.2px;background:#e6eef8;border-bottom:1px solid #b8c8d8"></div><svg class="a" style="left:2.4px;top:11.6px" width="4.2" height="6" viewBox="0 0 4.2 6"><rect x=".5" y=".5" width="3.2" height="5" fill="#eef0ff" stroke="#3438b4" stroke-width="1"/><path d="M1 3h2.2" stroke="#3438b4" stroke-width=".9"/></svg><div class="rh" style="left:8.2px;top:10.0px;width:21.4px;height:10.2px;padding-top:2.2px;font-size:6px;font-weight:bold">85</div><div class="cl" style="left:29.6px;top:10.0px;width:29.3px;height:10.2px;padding-top:3.1px;font-size:5.8px">1.000</div><div class="cl" style="left:58.9px;top:10.0px;width:25.3px;height:10.2px;padding-top:3.1px;font-size:5.8px">1</div><div class="cl" style="left:84.2px;top:10.0px;width:24.5px;height:10.2px;padding-top:3.1px;font-size:5.8px">CV</div><div class="cl" style="left:108.7px;top:10.0px;width:39.5px;height:10.2px;padding-top:3.1px;font-size:5.8px">R=0.388</div><div class="cl" style="left:148.2px;top:10.0px;width:33.0px;height:10.2px;padding-top:3.1px;font-size:5.8px">10.371</div><div class="cl" style="left:181.2px;top:10.0px;width:32.1px;height:10.2px;padding-top:3.1px;font-size:5.8px">0.1982</div><div class="cl" style="left:213.3px;top:10.0px;width:32.5px;height:10.2px;padding-top:3.1px;font-size:5.8px">52.334</div><div class="cl" style="left:245.8px;top:10.0px;width:32.1px;height:10.2px;padding-top:3.1px;font-size:5.8px">2.055</div><div class="a" style="left:0;top:20.2px;width:8.2px;height:10.2px;background:#e6eef8;border-bottom:1px solid #b8c8d8"></div><div class="rh" style="left:8.2px;top:20.2px;width:21.4px;height:10.2px;padding-top:2.2px;font-size:6px;font-weight:bold"></div><div class="cl" style="left:29.6px;top:20.2px;width:29.3px;height:10.2px;padding-top:3.1px;font-size:5.8px"></div><div class="cl" style="left:58.9px;top:20.2px;width:25.3px;height:10.2px;padding-top:3.1px;font-size:5.8px">2</div><div class="cl" style="left:84.2px;top:20.2px;width:24.5px;height:10.2px;padding-top:3.1px;font-size:5.8px"></div><div class="cl" style="left:108.7px;top:20.2px;width:39.5px;height:10.2px;padding-top:3.1px;font-size:5.8px"></div><div class="cl" style="left:148.2px;top:20.2px;width:33.0px;height:10.2px;padding-top:3.1px;font-size:5.8px">10.389</div><div class="cl" style="left:181.2px;top:20.2px;width:32.1px;height:10.2px;padding-top:3.1px;font-size:5.8px">1.9965</div><div class="cl" style="left:213.3px;top:20.2px;width:32.5px;height:10.2px;padding-top:3.1px;font-size:5.8px">5.204</div><div class="cl" style="left:245.8px;top:20.2px;width:32.1px;height:10.2px;padding-top:3.1px;font-size:5.8px">20.741</div><div class="a" style="left:0;top:30.4px;width:8.2px;height:10.2px;background:#e6eef8;border-bottom:1px solid #b8c8d8"></div><svg class="a" style="left:2.4px;top:32.0px" width="4.2" height="6" viewBox="0 0 4.2 6"><rect x=".5" y=".5" width="3.2" height="5" fill="#eef0ff" stroke="#3438b4" stroke-width="1"/><path d="M1 3h2.2" stroke="#3438b4" stroke-width=".9"/></svg><div class="rh" style="left:8.2px;top:30.4px;width:21.4px;height:10.2px;padding-top:2.2px;font-size:6px;font-weight:bold">86</div><div class="cl sel" style="left:29.6px;top:30.4px;width:29.3px;height:10.2px;padding-top:3.1px;font-size:5.8px">1.000</div><div class="cl" style="left:58.9px;top:30.4px;width:25.3px;height:10.2px;padding-top:3.1px;font-size:5.8px">1</div><div class="cl" style="left:84.2px;top:30.4px;width:24.5px;height:10.2px;padding-top:3.1px;font-size:5.8px">CV</div><div class="cl" style="left:108.7px;top:30.4px;width:39.5px;height:10.2px;padding-top:3.1px;font-size:5.8px">R=0.420</div><div class="cl" style="left:148.2px;top:30.4px;width:33.0px;height:10.2px;padding-top:3.1px;font-size:5.8px">10.412</div><div class="cl" style="left:181.2px;top:30.4px;width:32.1px;height:10.2px;padding-top:3.1px;font-size:5.8px">0.1982</div><div class="cl" style="left:213.3px;top:30.4px;width:32.5px;height:10.2px;padding-top:3.1px;font-size:5.8px">52.533</div><div class="cl" style="left:245.8px;top:30.4px;width:32.1px;height:10.2px;padding-top:3.1px;font-size:5.8px">2.064</div><div class="a" style="left:0;top:40.6px;width:8.2px;height:10.2px;background:#e6eef8;border-bottom:1px solid #b8c8d8"></div><div class="rh" style="left:8.2px;top:40.6px;width:21.4px;height:10.2px;padding-top:2.2px;font-size:6px;font-weight:bold"></div><div class="cl" style="left:29.6px;top:40.6px;width:29.3px;height:10.2px;padding-top:3.1px;font-size:5.8px"></div><div class="cl" style="left:58.9px;top:40.6px;width:25.3px;height:10.2px;padding-top:3.1px;font-size:5.8px">2</div><div class="cl" style="left:84.2px;top:40.6px;width:24.5px;height:10.2px;padding-top:3.1px;font-size:5.8px"></div><div class="cl" style="left:108.7px;top:40.6px;width:39.5px;height:10.2px;padding-top:3.1px;font-size:5.8px"></div><div class="cl" style="left:148.2px;top:40.6px;width:33.0px;height:10.2px;padding-top:3.1px;font-size:5.8px">10.430</div><div class="cl" style="left:181.2px;top:40.6px;width:32.1px;height:10.2px;padding-top:3.1px;font-size:5.8px">1.9969</div><div class="cl" style="left:213.3px;top:40.6px;width:32.5px;height:10.2px;padding-top:3.1px;font-size:5.8px">5.223</div><div class="cl" style="left:245.8px;top:40.6px;width:32.1px;height:10.2px;padding-top:3.1px;font-size:5.8px">20.828</div><div class="a" style="left:0;top:50.8px;width:8.2px;height:10.2px;background:#e6eef8;border-bottom:1px solid #b8c8d8"></div><svg class="a" style="left:2.4px;top:52.4px" width="4.2" height="6" viewBox="0 0 4.2 6"><rect x=".5" y=".5" width="3.2" height="5" fill="#eef0ff" stroke="#3438b4" stroke-width="1"/><path d="M1 3h2.2" stroke="#3438b4" stroke-width=".9"/></svg><div class="rh" style="left:8.2px;top:50.8px;width:21.4px;height:10.2px;padding-top:2.2px;font-size:6px;font-weight:bold">87</div><div class="cl" style="left:29.6px;top:50.8px;width:29.3px;height:10.2px;padding-top:3.1px;font-size:5.8px">1.000</div><div class="cl" style="left:58.9px;top:50.8px;width:25.3px;height:10.2px;padding-top:3.1px;font-size:5.8px">1</div><div class="cl" style="left:84.2px;top:50.8px;width:24.5px;height:10.2px;padding-top:3.1px;font-size:5.8px">CV</div><div class="cl" style="left:108.7px;top:50.8px;width:39.5px;height:10.2px;padding-top:3.1px;font-size:5.8px">R=0.460</div><div class="cl" style="left:148.2px;top:50.8px;width:33.0px;height:10.2px;padding-top:3.1px;font-size:5.8px">10.447</div><div class="cl" style="left:181.2px;top:50.8px;width:32.1px;height:10.2px;padding-top:3.1px;font-size:5.8px">0.1981</div><div class="cl" style="left:213.3px;top:50.8px;width:32.5px;height:10.2px;padding-top:3.1px;font-size:5.8px">52.723</div><div class="cl" style="left:245.8px;top:50.8px;width:32.1px;height:10.2px;padding-top:3.1px;font-size:5.8px">2.070</div><div class="a" style="left:0;top:61.0px;width:8.2px;height:10.2px;background:#e6eef8;border-bottom:1px solid #b8c8d8"></div><div class="rh" style="left:8.2px;top:61.0px;width:21.4px;height:10.2px;padding-top:2.2px;font-size:6px;font-weight:bold"></div><div class="cl" style="left:29.6px;top:61.0px;width:29.3px;height:10.2px;padding-top:3.1px;font-size:5.8px"></div><div class="cl" style="left:58.9px;top:61.0px;width:25.3px;height:10.2px;padding-top:3.1px;font-size:5.8px">2</div><div class="cl" style="left:84.2px;top:61.0px;width:24.5px;height:10.2px;padding-top:3.1px;font-size:5.8px"></div><div class="cl" style="left:108.7px;top:61.0px;width:39.5px;height:10.2px;padding-top:3.1px;font-size:5.8px"></div><div class="cl" style="left:148.2px;top:61.0px;width:33.0px;height:10.2px;padding-top:3.1px;font-size:5.8px">10.469</div><div class="cl" style="left:181.2px;top:61.0px;width:32.1px;height:10.2px;padding-top:3.1px;font-size:5.8px">1.9969</div><div class="cl" style="left:213.3px;top:61.0px;width:32.5px;height:10.2px;padding-top:3.1px;font-size:5.8px">5.243</div><div class="cl" style="left:245.8px;top:61.0px;width:32.1px;height:10.2px;padding-top:3.1px;font-size:5.8px">20.905</div><div class="a" style="left:0;top:71.2px;width:8.2px;height:10.2px;background:#e6eef8;border-bottom:1px solid #b8c8d8"></div><svg class="a" style="left:2.4px;top:72.8px" width="4.2" height="6" viewBox="0 0 4.2 6"><rect x=".5" y=".5" width="3.2" height="5" fill="#eef0ff" stroke="#3438b4" stroke-width="1"/><path d="M1 3h2.2" stroke="#3438b4" stroke-width=".9"/></svg><div class="rh" style="left:8.2px;top:71.2px;width:21.4px;height:10.2px;padding-top:2.2px;font-size:6px;font-weight:bold">88</div><div class="cl" style="left:29.6px;top:71.2px;width:29.3px;height:10.2px;padding-top:3.1px;font-size:5.8px">1.000</div><div class="cl" style="left:58.9px;top:71.2px;width:25.3px;height:10.2px;padding-top:3.1px;font-size:5.8px">1</div><div class="cl" style="left:84.2px;top:71.2px;width:24.5px;height:10.2px;padding-top:3.1px;font-size:5.8px">CV</div><div class="cl" style="left:108.7px;top:71.2px;width:39.5px;height:10.2px;padding-top:3.1px;font-size:5.8px">R=0.510</div><div class="cl" style="left:148.2px;top:71.2px;width:33.0px;height:10.2px;padding-top:3.1px;font-size:5.8px">10.491</div><div class="cl" style="left:181.2px;top:71.2px;width:32.1px;height:10.2px;padding-top:3.1px;font-size:5.8px">0.1982</div><div class="cl" style="left:213.3px;top:71.2px;width:32.5px;height:10.2px;padding-top:3.1px;font-size:5.8px">52.924</div><div class="cl" style="left:245.8px;top:71.2px;width:32.1px;height:10.2px;padding-top:3.1px;font-size:5.8px">2.080</div><div class="a" style="left:0;top:81.4px;width:8.2px;height:10.2px;background:#e6eef8;border-bottom:1px solid #b8c8d8"></div><div class="rh" style="left:8.2px;top:81.4px;width:21.4px;height:10.2px;padding-top:2.2px;font-size:6px;font-weight:bold"></div><div class="cl" style="left:29.6px;top:81.4px;width:29.3px;height:10.2px;padding-top:3.1px;font-size:5.8px"></div><div class="cl" style="left:58.9px;top:81.4px;width:25.3px;height:10.2px;padding-top:3.1px;font-size:5.8px">2</div><div class="cl" style="left:84.2px;top:81.4px;width:24.5px;height:10.2px;padding-top:3.1px;font-size:5.8px"></div><div class="cl" style="left:108.7px;top:81.4px;width:39.5px;height:10.2px;padding-top:3.1px;font-size:5.8px"></div><div class="cl" style="left:148.2px;top:81.4px;width:33.0px;height:10.2px;padding-top:3.1px;font-size:5.8px">10.513</div><div class="cl" style="left:181.2px;top:81.4px;width:32.1px;height:10.2px;padding-top:3.1px;font-size:5.8px">1.9968</div><div class="cl" style="left:213.3px;top:81.4px;width:32.5px;height:10.2px;padding-top:3.1px;font-size:5.8px">5.265</div><div class="cl" style="left:245.8px;top:81.4px;width:32.1px;height:10.2px;padding-top:3.1px;font-size:5.8px">20.992</div><div class="a" style="left:0;top:91.6px;width:8.2px;height:10.2px;background:#e6eef8;border-bottom:1px solid #b8c8d8"></div><svg class="a" style="left:2.4px;top:93.2px" width="4.2" height="6" viewBox="0 0 4.2 6"><rect x=".5" y=".5" width="3.2" height="5" fill="#eef0ff" stroke="#3438b4" stroke-width="1"/><path d="M1 3h2.2" stroke="#3438b4" stroke-width=".9"/></svg><div class="rh" style="left:8.2px;top:91.6px;width:21.4px;height:10.2px;padding-top:2.2px;font-size:6px;font-weight:bold">89</div><div class="cl" style="left:29.6px;top:91.6px;width:29.3px;height:10.2px;padding-top:3.1px;font-size:5.8px">1.000</div><div class="cl" style="left:58.9px;top:91.6px;width:25.3px;height:10.2px;padding-top:3.1px;font-size:5.8px">1</div><div class="cl" style="left:84.2px;top:91.6px;width:24.5px;height:10.2px;padding-top:3.1px;font-size:5.8px">CV</div><div class="cl" style="left:108.7px;top:91.6px;width:39.5px;height:10.2px;padding-top:3.1px;font-size:5.8px">R=0.551</div><div class="cl" style="left:148.2px;top:91.6px;width:33.0px;height:10.2px;padding-top:3.1px;font-size:5.8px">10.533</div><div class="cl" style="left:181.2px;top:91.6px;width:32.1px;height:10.2px;padding-top:3.1px;font-size:5.8px">0.1983</div><div class="cl" style="left:213.3px;top:91.6px;width:32.5px;height:10.2px;padding-top:3.1px;font-size:5.8px">53.127</div><div class="cl" style="left:245.8px;top:91.6px;width:32.1px;height:10.2px;padding-top:3.1px;font-size:5.8px">2.088</div><div class="a" style="left:277.9px;top:0;width:12.1px;height:98.2px;background:#cfe6f8"></div><div class="a" style="left:281.4px;top:0;width:7.8px;height:98.2px;background:#ecf5fd;border-left:.6px solid #bcd6f0;border-right:.6px solid #bcd6f0"></div><svg class="a" style="left:281.4px;top:0" width="7.8" height="98.2" viewBox="0 0 7.8 98.2"><path d="M2 5.6 L3.9 3.6 L5.8 5.6" fill="none" stroke="#2c4cae" stroke-width="1.1"/><rect x=".6" y="73.4" width="6.6" height="7.2" rx="1.2" fill="#c2d8f8" stroke="#98b8ea" stroke-width=".6"/><path d="M2.2 75.6h3.4M2.2 77h3.4M2.2 78.4h3.4" stroke="#eef6ff" stroke-width=".6"/><path d="M2 92.6 L3.9 94.6 L5.8 92.6" fill="none" stroke="#2c4cae" stroke-width="1.1"/></svg></div>
<div class="lb" style="left: 396.4px; top: 167.6px; width: 75.4px; height: 10px; padding: 2.3px 0px 0px 3.4px; font-size: 6.8px;">编辑起始步骤</div><div class="in" style="left:473.6px;top:167.6px;width:46px;height:10px;padding:2.4px 5px 0 5px;font-size:6.2px;text-align:left">61</div><svg class="a" style="left:512.2px;top:168.6px" width="7.2" height="8" viewBox="0 0 7.2 8"><rect x=".3" y=".3" width="6.6" height="7.4" rx=".8" fill="#f2f4f8" stroke="#aab4c6" stroke-width=".6"/><path d="M1.8 2.9 H5.4 L3.6 5.5Z" fill="#16181c"/></svg><div class="lb" style="left: 396.4px; top: 179.4px; width: 75.4px; height: 10.2px; padding: 2.4px 0px 0px 3.4px; font-size: 6.8px;">编辑截止步骤</div><div class="in" style="left:473.6px;top:179.4px;width:46px;height:10.2px;padding:2.5px 5px 0 5px;font-size:6.2px;text-align:left">100</div><svg class="a" style="left:512.2px;top:180.6px" width="7.2" height="8" viewBox="0 0 7.2 8"><rect x=".3" y=".3" width="6.6" height="7.4" rx=".8" fill="#f2f4f8" stroke="#aab4c6" stroke-width=".6"/><path d="M1.8 2.9 H5.4 L3.6 5.5Z" fill="#16181c"/></svg><div class="btn " style="left: 531.4px; top: 171.6px; width: 71.6px; height: 13.8px; padding-top: 2.4px;">设置</div><div class="btn " style="left: 608.2px; top: 171.6px; width: 72.4px; height: 13.8px; padding-top: 2.4px;">清除</div><div class="lb" style="left: 396.4px; top: 191px; width: 41px; height: 8.8px; padding: 1.7px 0px 0px 3.4px; font-size: 6.8px;">电池</div><div class="in" style="left: 437px; top: 191px; width: 41.6px; height: 8.8px; padding: 1.6px 2.6px 0px; font-size: 6.6px; text-align: left;">所有</div><svg class="a" style="left:471.4px;top:191.6px" width="7.2" height="7.6" viewBox="0 0 7.2 7.6"><rect x=".3" y=".3" width="6.6" height="7.0" rx=".8" fill="#f2f4f8" stroke="#aab4c6" stroke-width=".6"/><path d="M1.8 2.6999999999999997 H5.4 L3.6 5.3Z" fill="#16181c"/></svg><div class="lb" style="left: 479.4px; top: 191px; width: 56px; height: 8.8px; padding: 1.7px 0px 0px 3.4px; font-size: 6.8px;">搜索类型</div><div class="in" style="left: 535.4px; top: 191px; width: 54.4px; height: 8.8px; padding: 1.6px 3px 0px; font-size: 6.6px; text-align: left;">精确搜索</div><svg class="a" style="left:582.8px;top:191.6px" width="7.2" height="7.6" viewBox="0 0 7.2 7.6"><rect x=".3" y=".3" width="6.6" height="7.0" rx=".8" fill="#f2f4f8" stroke="#aab4c6" stroke-width=".6"/><path d="M1.8 2.6999999999999997 H5.4 L3.6 5.3Z" fill="#16181c"/></svg><div class="lb" style="left: 590.6px; top: 191px; width: 56px; height: 8.8px; padding: 1.7px 0px 0px 9px; font-size: 6.8px;">模式</div><svg style="position:absolute;left:591.6px;top:192.6px" width="6" height="6" viewBox="0 0 8 8"><rect x=".5" y=".5" width="7" height="7" fill="#f8f8f8" stroke="#5a6270" stroke-width="1"/><path d="M1.8 4 L3.4 6 L6.6 1.6" fill="none" stroke="#222" stroke-width="1.3"/></svg><div class="in" style="left:646.6px;top:191px;width:38.6px;height:8.8px;padding:1.8px 5px 0 5px;font-size:6.2px;text-align:left">CV</div><svg class="a" style="left:678px;top:191.6px" width="7.2" height="7.6" viewBox="0 0 7.2 7.6"><rect x=".3" y=".3" width="6.6" height="7.0" rx=".8" fill="#f2f4f8" stroke="#aab4c6" stroke-width=".6"/><path d="M1.8 2.6999999999999997 H5.4 L3.6 5.3Z" fill="#16181c"/></svg><div class="lb" style="left: 396.4px; top: 201.8px; width: 61.8px; height: 9.8px; padding: 2.2px 0px 0px 10.6px; font-size: 6.8px;">设置值</div><svg style="position:absolute;left:399.6px;top:203.8px" width="6" height="6" viewBox="0 0 8 8"><rect x=".5" y=".5" width="7" height="7" fill="#f8f8f8" stroke="#5a6270" stroke-width="1"/><path d="M1.8 4 L3.4 6 L6.6 1.6" fill="none" stroke="#222" stroke-width="1.3"/></svg><div class="in" style="left:460px;top:201.8px;width:53.6px;height:9.8px;padding:2.3px 4px 0 4px;font-size:6.2px;text-align:center">-1.000</div><div class="btn" style="left:514.8px;top:201.8px;width:19.6px;height:9.6px;font-size:8px;letter-spacing:0;padding-top:0;border-radius:1.5px;border-color:#b4b8c0;color:transparent">~<svg style="position:absolute;left:5.4px;top:2.4px" width="7" height="4" viewBox="0 0 7 4"><path d="M.6 2.6 Q2 .2 3.5 2 Q5 3.8 6.4 1.4" fill="none" stroke="#222" stroke-width=".9"/></svg></div><div class="in" style="left:535.6px;top:201.8px;width:52.6px;height:9.8px;padding:2.3px 4px 0 4px;font-size:6.2px;text-align:center">1.000</div><div class="lb" style="left: 589.6px; top: 201.8px; width: 40px; height: 9.8px; padding: 2.2px 0px 0px 10px; font-size: 6.8px;">延时</div><svg style="position:absolute;left:591.6px;top:203.8px" width="6" height="6" viewBox="0 0 8 8"><rect x=".5" y=".5" width="7" height="7" fill="#f8f8f8" stroke="#5a6270" stroke-width="1"/><path d="M1.8 4 L3.4 6 L6.6 1.6" fill="none" stroke="#222" stroke-width="1.3"/></svg><div class="in" style="left:631.4px;top:201.8px;width:53.8px;height:9.8px;padding:2.3px 4px 0 4px;font-size:6.2px;text-align:center">1.000 S</div><div class="ip" style="left:393px;top:218.2px;width:294.4px;height:26px;background:#62b6f0"></div>
<div class="lb" style="left: 398.8px; top: 221.8px; width: 32.6px; height: 8.8px; padding: 1.7px 0px 0px 3px; font-size: 6.8px;">开始</div><div class="in" style="left:431.4px;top:221.8px;width:32.2px;height:8.8px;padding:1.8px 5px 0 5px;font-size:6.2px;text-align:left">1</div><div class="a" style="left:463.6px;top:221.8px;width:6.4px;height:8.8px;background:linear-gradient(#fafafa,#dedede);border:.6px solid #9aa4b4"></div><div class="lb" style="left: 398.8px; top: 232.2px; width: 32.6px; height: 9px; padding: 1.8px 0px 0px 3px; font-size: 6.8px;">步数</div><div class="in" style="left:431.4px;top:232.2px;width:32.2px;height:9px;padding:1.9px 5px 0 5px;font-size:6.2px;text-align:left">100</div><div class="a" style="left:463.6px;top:232.2px;width:6.4px;height:9px;background:linear-gradient(#fafafa,#dedede);border:.6px solid #9aa4b4"></div><div class="btn dis" style="left: 478.2px; top: 223.6px; width: 65.4px; height: 16.4px; padding-top: 3.7px;">运行</div><div class="btn def" style="left: 547.8px; top: 223.6px; width: 64.8px; height: 16.4px; padding-top: 3.7px;">停止</div><div class="btn dis" style="left: 616.6px; top: 223.6px; width: 65px; height: 16.4px; padding-top: 3.7px;">清除结果</div><div class="ip" style="left:393.2px;top:246px;width:294px;height:105.6px;background:#ace0f8;border-color:#cdeefe"></div>
<div class="a" style="left:396.6px;top:250.4px;width:275.0px;height:30px"><div class="hd" style="left: 0px; top: 0px; width: 26.4px; height: 10.1px; padding-top: 2.4px; font-size: 5.5px;">电池</div><div class="hd" style="left: 26.4px; top: 0px; width: 35.2px; height: 10.1px; padding-top: 2.4px; font-size: 5.5px;">最大功率</div><div class="hd" style="left: 61.6px; top: 0px; width: 35.7px; height: 10.1px; padding-top: 2.4px; font-size: 5.5px;">电流</div><div class="hd" style="left: 97.3px; top: 0px; width: 35.5px; height: 10.1px; padding-top: 2.4px; font-size: 5.5px;">电压</div><div class="hd" style="left: 132.8px; top: 0px; width: 35.7px; height: 10.1px; padding-top: 2.4px; font-size: 5.5px;">电阻</div><div class="hd" style="left: 168.5px; top: 0px; width: 35.6px; height: 10.1px; padding-top: 2.4px; font-size: 5.5px;">短路电流</div><div class="hd" style="left: 204.1px; top: 0px; width: 35.6px; height: 10.1px; padding-top: 2.4px; font-size: 5.5px;">开路电压</div><div class="hd" style="left: 239.7px; top: 0px; width: 35.3px; height: 10.1px; padding-top: 2.4px; font-size: 5.5px;">填充因子</div><div class="rh" style="left:0;top:10.1px;width:26.4px;height:9.9px;padding-top:2.7px;font-size:6px">1</div><div class="cl sel" style="left:26.4px;top:10.1px;width:35.2px;height:9.9px;padding-top:2.7px;font-size:5.9px">21.964</div><div class="cl" style="left:61.6px;top:10.1px;width:35.7px;height:9.9px;padding-top:2.7px;font-size:5.9px">1.9952</div><div class="cl" style="left:97.3px;top:10.1px;width:35.5px;height:9.9px;padding-top:2.7px;font-size:5.9px">11.003</div><div class="cl" style="left:132.8px;top:10.1px;width:35.7px;height:9.9px;padding-top:2.7px;font-size:5.9px">5.515</div><div class="cl" style="left:168.5px;top:10.1px;width:35.6px;height:9.9px;padding-top:2.7px;font-size:5.9px">1.9980</div><div class="cl" style="left:204.1px;top:10.1px;width:35.6px;height:9.9px;padding-top:2.7px;font-size:5.9px">16.011</div><div class="cl" style="left:239.7px;top:10.1px;width:35.3px;height:9.9px;padding-top:2.7px;font-size:5.9px">73.17 %</div><div class="rh" style="left:0;top:20.0px;width:26.4px;height:9.9px;padding-top:2.7px;font-size:6px">2</div><div class="cl" style="left:26.4px;top:20.0px;width:35.2px;height:9.9px;padding-top:2.7px;font-size:5.9px">41.890</div><div class="cl" style="left:61.6px;top:20.0px;width:35.7px;height:9.9px;padding-top:2.7px;font-size:5.9px">1.9966</div><div class="cl" style="left:97.3px;top:20.0px;width:35.5px;height:9.9px;padding-top:2.7px;font-size:5.9px">20.980</div><div class="cl" style="left:132.8px;top:20.0px;width:35.7px;height:9.9px;padding-top:2.7px;font-size:5.9px">10.508</div><div class="cl" style="left:168.5px;top:20.0px;width:35.6px;height:9.9px;padding-top:2.7px;font-size:5.9px">1.9980</div><div class="cl" style="left:204.1px;top:20.0px;width:35.6px;height:9.9px;padding-top:2.7px;font-size:5.9px">29.980</div><div class="cl" style="left:239.7px;top:20.0px;width:35.3px;height:9.9px;padding-top:2.7px;font-size:5.9px">69.93 %</div></div>
<div class="ip" style="left:393px;top:355.4px;width:295.4px;height:41.8px;background:#6cc0f0;border-color:#92d4fc;border-radius:5px"></div>
<div class="t c" style="left: 419px; top: 361.4px; width: 30px; font-size: 6.8px; font-weight: bold; color: rgb(10, 26, 42);">电池1</div><div class="t c" style="left: 450px; top: 361.4px; width: 30px; font-size: 6.8px; font-weight: bold; color: rgb(10, 26, 42);">电池2</div><div class="t" style="left:403.6px;top:371.4px;font-size:6.8px;color:#3a4e66">RX</div><div class="t" style="left:403.6px;top:384px;font-size:6.8px;color:#3a4e66">TX</div><div class="a" style="left:424.2px;top:370.6px;width:18.4px;height:9.2px;background:#12e612;border:1px solid #9af29a;border-top-color:#52c452;border-left-color:#52c452"></div><div class="a" style="left:424.2px;top:383px;width:18.4px;height:9.2px;background:#12e612;border:1px solid #9af29a;border-top-color:#52c452;border-left-color:#52c452"></div><div class="a" style="left:455.4px;top:370.6px;width:18.4px;height:9.2px;background:#12e612;border:1px solid #9af29a;border-top-color:#52c452;border-left-color:#52c452"></div><div class="a" style="left:455.4px;top:383px;width:18.4px;height:9.2px;background:#12e612;border:1px solid #9af29a;border-top-color:#52c452;border-left-color:#52c452"></div>
<div class="a" style="left:393.6px;top:404.3px;width:294.4px;height:11.2px;background:linear-gradient(#fafafa,#e2e2e2 60%,#cfcfcf);border:.6px solid #f4f4f4"><div class="a" style="left:0;top:0;width:244.2px;height:11.2px;background:linear-gradient(#fbe0ae 0,#f4bc6c 35%,#eea64a 70%,#f2b868 100%)"></div><div class="t b c" style="left:0;top:1px;width:293px;font-size:8.3px;color:#15120e">Running 83%</div></div>

</body></html>
